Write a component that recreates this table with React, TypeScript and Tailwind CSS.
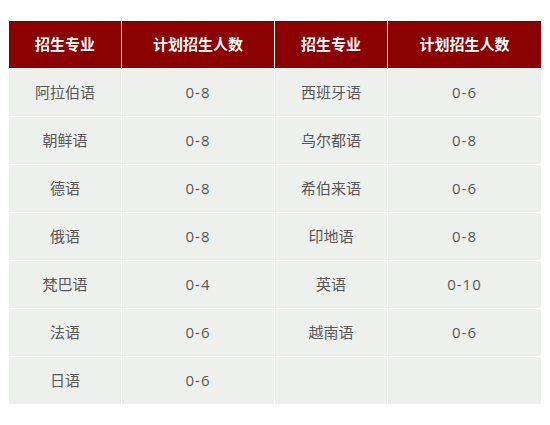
import React from "react";

const rows: [string, string, string, string][] = [
  ["阿拉伯语", "0-8", "西班牙语", "0-6"],
  ["朝鲜语", "0-8", "乌尔都语", "0-8"],
  ["德语", "0-8", "希伯来语", "0-6"],
  ["俄语", "0-8", "印地语", "0-8"],
  ["梵巴语", "0-4", "英语", "0-10"],
  ["法语", "0-6", "越南语", "0-6"],
  ["日语", "0-6", "", ""],
];

export default function App() {
  return (
    <div
      className="w-[550px] h-[425px] bg-white pl-[9px] pt-[21px]"
      style={{ fontFamily: '"Noto Sans CJK SC", "Noto Sans", sans-serif' }}
    >
      <div className="grid grid-cols-[112px_152px_112px_153px] gap-px bg-white w-[532px]">
        {["招生专业", "计划招生人数", "招生专业", "计划招生人数"].map((h, i) => (
          <div
            key={i}
            className="h-[47px] bg-[#8b0000] text-white font-bold text-[15px] flex items-center justify-center"
          >
            {h}
          </div>
        ))}
        {rows.map((r, ri) =>
          r.map((c, ci) =>
            ci % 2 === 1 ? (
              <div
                key={`${ri}-${ci}`}
                className="h-[47px] bg-[#eef0ee] text-[#585858] text-[15px] tracking-[1px] flex items-center justify-center font-['Open_Sans','Noto_Sans_CJK_SC',sans-serif]"
              >
                {c}
              </div>
            ) : (
              <div
                key={`${ri}-${ci}`}
                className="h-[47px] bg-[#eef0ee] text-[#585858] text-[15px] flex items-center justify-center"
              >
                {c}
              </div>
            )
          )
        )}
      </div>
    </div>
  );
}
